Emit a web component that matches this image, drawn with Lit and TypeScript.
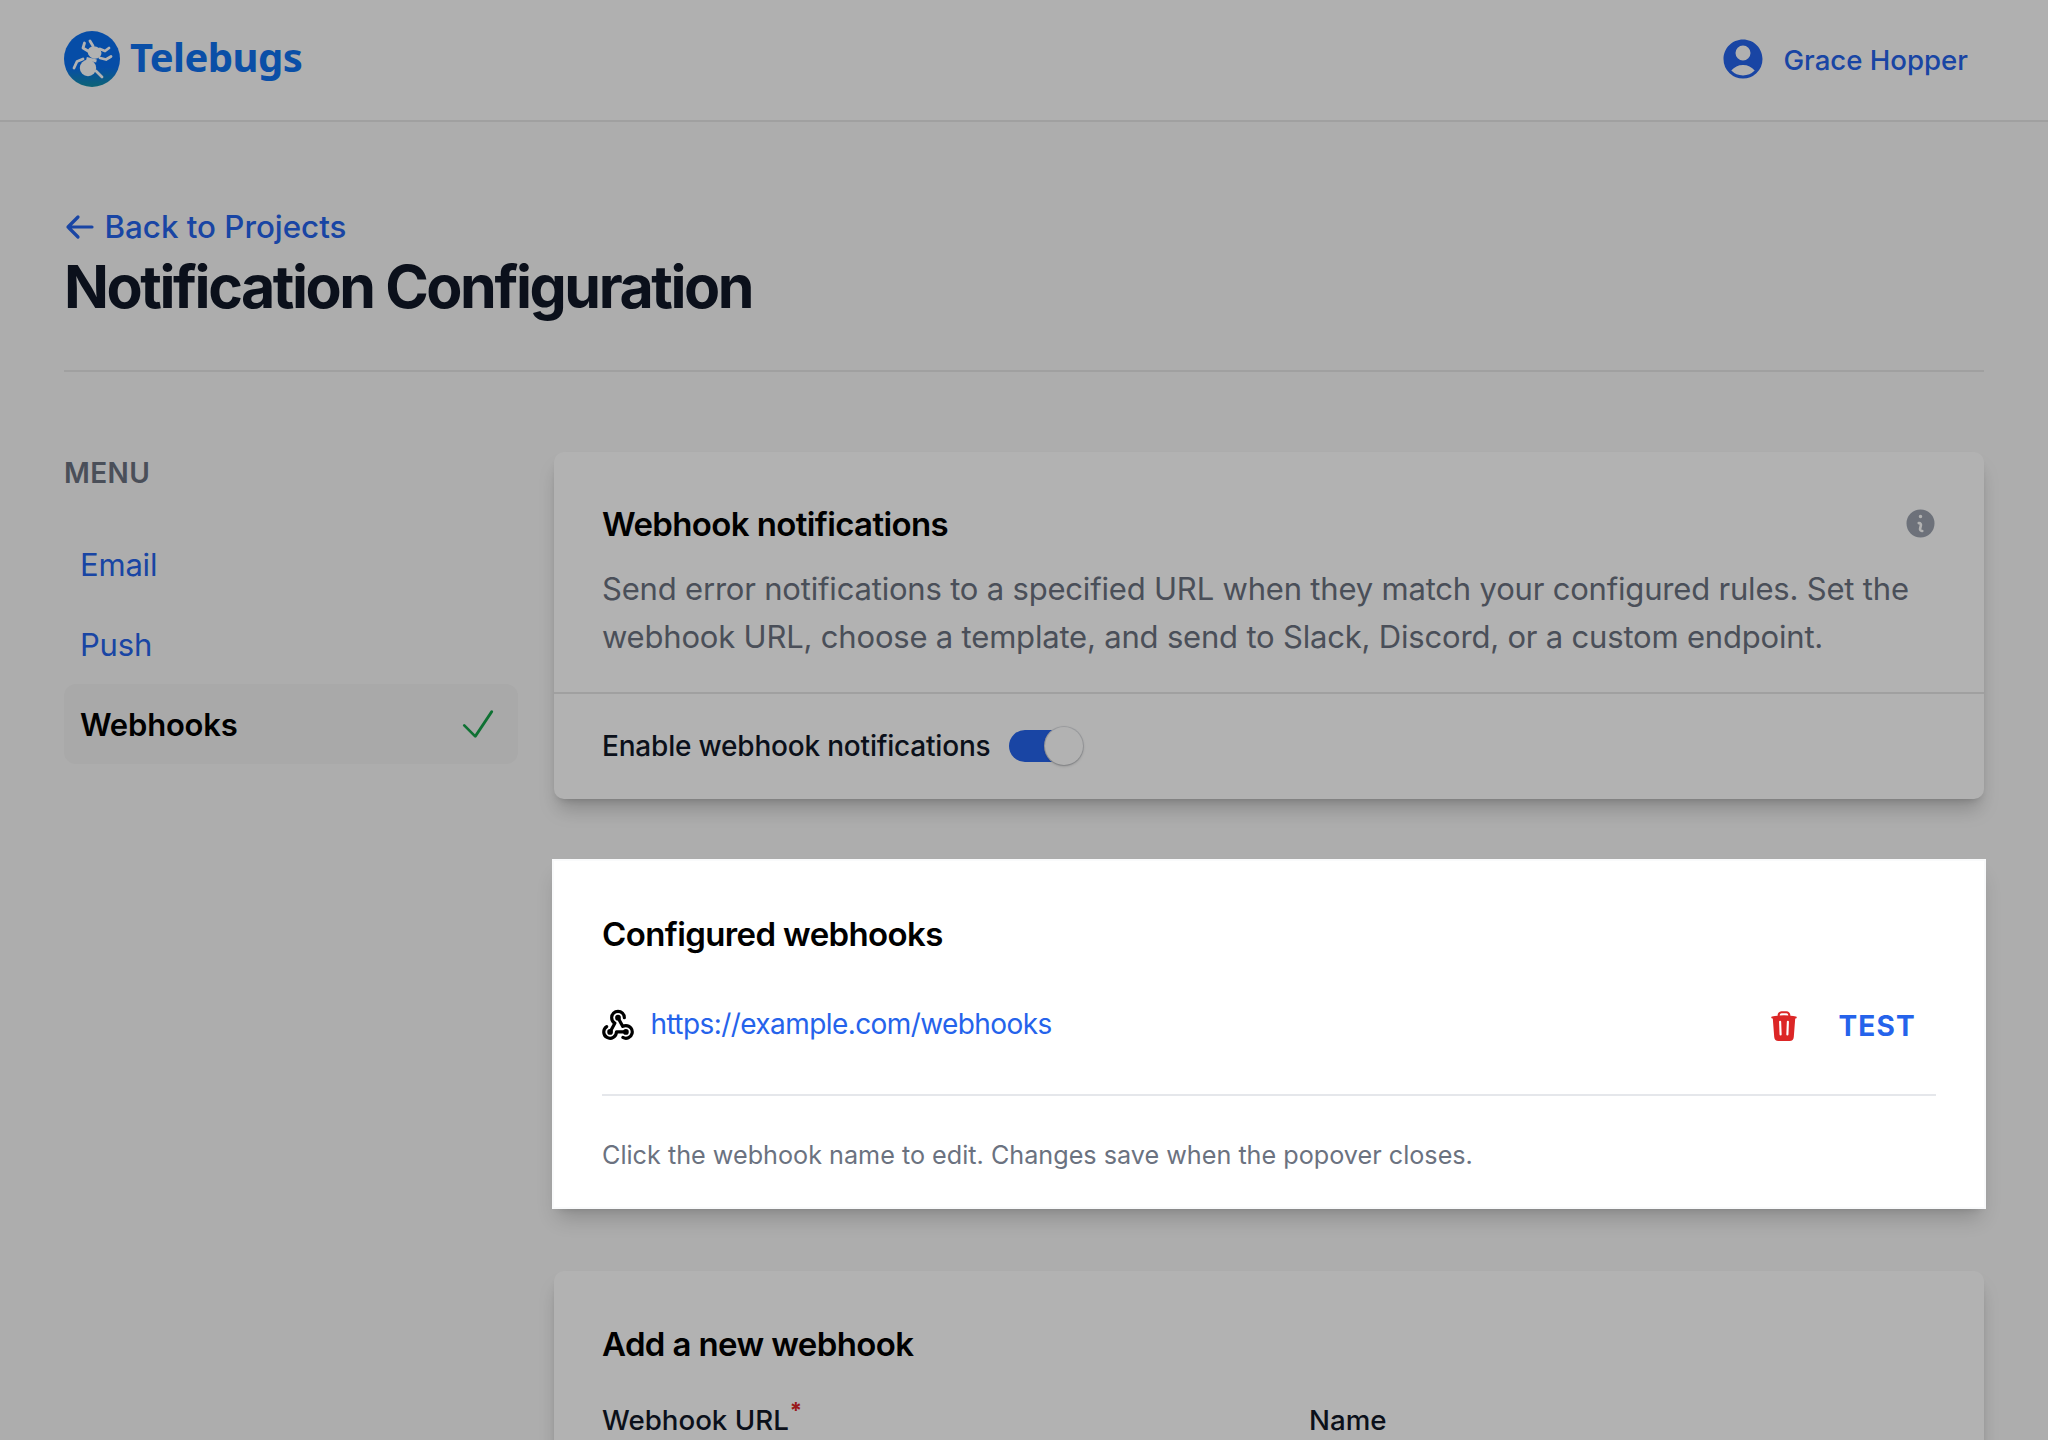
import { LitElement, html, css } from "lit";
import { customElement } from "lit/decorators.js";

@customElement("app-root")
export class AppRoot extends LitElement {
  static styles = css`
    :host { display: block; position: relative; width: 2048px; height: 1440px; overflow: hidden; background: #f8f8f8; font-family: Inter, "Liberation Sans", sans-serif; color: #000; }
    * { box-sizing: border-box; }
    .overlay { position: absolute; inset: 0; background: rgba(0,0,0,.3); z-index: 1; pointer-events: none; }
    header { height: 122px; background: #fcfcfc; border-bottom: 2px solid #e5e5e5; padding: 0 80px 2px 64px; display: flex; align-items: center; justify-content: space-between; }
    .brand { display: flex; align-items: center; gap: 10px; }
    .brand svg { width: 56px; height: 56px; display: block; }
    .brand span { font: 700 40px/56px "Noto Sans", sans-serif; color: #0f71f0; margin-top: -4px; letter-spacing: -.55px; }
    .user { display: flex; align-items: center; gap: 16.5px; color: #2563eb; font-size: 27.6px; font-weight: 500; }
    .user span { margin-top: 2px; }
    .user svg { width: 48px; height: 48px; display: block; }
    main { padding: 83px 64px 0; }
    .back { display: flex; align-items: center; gap: 8.5px; height: 44px; color: #2563eb; font-size: 31.3px; font-weight: 500; }
    .back svg { width: 32px; height: 32px; }
    h1 { margin: 2px 0 0; font-size: 59px; line-height: 72px; font-weight: 700; letter-spacing: -2.43px; color: #111827; }
    .rule { height: 2px; background: #e5e5e5; margin-top: 47px; }
    .cols { display: grid; grid-template-columns: 454px 1fr; column-gap: 36px; margin-top: 80px; }
    .side h2 { margin: 0; padding-top: 7px; font-size: 28px; line-height: 28px; font-weight: 600; letter-spacing: .4px; color: #6b7280; }
    .nav { margin-top: 37px; display: flex; flex-direction: column; }
    .nav a { height: 80px; padding: 0 18px 0 16px; display: flex; align-items: center; justify-content: space-between; font-size: 31px; letter-spacing: -.2px; color: #2563eb; border-radius: 12px; }
    .nav a.on { color: #000; font-weight: 600; background: #f2f2f2; }
    .nav svg { width: 44px; height: 44px; color: #16a34a; }
    .card { background: #fff; border-radius: 10px; box-shadow: 0 14px 20px -4px rgba(0,0,0,.2), 0 5px 8px -5px rgba(0,0,0,.2); }
    .card h3 { margin: 0; font-size: 33px; line-height: 44px; font-weight: 600; letter-spacing: -.62px; }
    .intro { padding: 50px 48px 31px; border-bottom: 2px solid #e5e5e5; position: relative; }
    .intro p { margin: 19px 0 0; font-size: 31px; letter-spacing: -.19px; line-height: 48px; color: #6b7280; }
    .info { position: absolute; right: 46px; top: 54px; width: 35px; height: 35px; color: #9ca3af; }
    .toggle-row { height: 105px; padding: 0 48px 2px; display: flex; align-items: center; gap: 19px; font-size: 28px; letter-spacing: -.2px; font-weight: 500; color: #111827; }
    .track { width: 74px; height: 32px; border-radius: 16px; background: #2563eb; position: relative; }
    .knob { position: absolute; right: 0; top: -3px; width: 38px; height: 38px; border-radius: 50%; background: #fff; box-shadow: 0 1px 3px rgba(0,0,0,.25), 0 0 0 1px #e5e7eb; }
    .spot { position: relative; z-index: 2; margin-top: 62px; padding: 51px 48px 32px; border-radius: 0; outline: 2px solid #f9fafb; }
    .row { display: flex; align-items: center; height: 60px; margin-top: 38px; }
    .hook { width: 38px; height: 38px; color: #000; margin: 0 13.5px 0 -3px; flex: none; }
    .url { color: #2563eb; font-size: 28px; letter-spacing: -.58px; flex: 1; }
    .trash { width: 34px; height: 34px; color: #dc2626; margin-top: 3px; }
    .test { margin: 4px 20px 0 37px; font-size: 28px; font-weight: 650; letter-spacing: 1.2px; color: #2563eb; }
    .divider { height: 2px; background: #e5e7eb; margin-top: 40px; }
    .hint { margin: 39px 0 0; font-size: 25.2px; line-height: 40px; color: #6b7280; }
    .add { margin-top: 64px; padding: 51px 48px 80px; }
    .fields { display: grid; grid-template-columns: 1fr 1fr; column-gap: 80px; margin-top: 34px; }
    .fields label { font-size: 27.7px; line-height: 40px; font-weight: 500; color: #111827; }
    .fields i { font-style: normal; color: #dc2626; font-size: 22px; font-weight: 700; vertical-align: 12px; margin-left: 1px; line-height: 0; }
  `;

  render() {
    return html`
      <header>
        <div class="brand">
          <svg viewBox="0 0 56 56">
            <defs><linearGradient id="g" x1="0" y1="0" x2="0" y2="1"><stop offset=".65" stop-color="#0a6ff0"/><stop offset="1" stop-color="#1490a8"/></linearGradient></defs>
            <circle cx="28" cy="28" r="28" fill="url(#g)"/>
            <g fill="none" stroke="#fff" stroke-width="2.8" stroke-linecap="round" stroke-linejoin="round">
              <path d="M19 28 13 30.500 10 37M32 40l6 6M24 20l-5-3 1.500-5M29 15l-3-5M36 18l5 2 4-3M36 27l6 1.500 5-3"/>
            </g>
            <circle cx="24" cy="37" r="8.200" fill="#fff"/>
            <ellipse cx="30.500" cy="21.500" rx="7" ry="6" transform="rotate(20 30.500 21.500)" fill="#fff"/>
            <path d="M22.500 27.500l10 2.500" stroke="#fff" stroke-width="3"/>
          </svg>
          <span>Telebugs</span>
        </div>
        <div class="user">
          <svg viewBox="0 0 24 24" fill="currentColor"><path fill-rule="evenodd" clip-rule="evenodd" d="M18.685 19.097A9.723 9.723 0 0 0 21.75 12c0-5.385-4.365-9.75-9.75-9.75S2.250 6.615 2.250 12a9.723 9.723 0 0 0 3.065 7.097A9.716 9.716 0 0 0 12 21.750a9.716 9.716 0 0 0 6.685-2.653Zm-12.540-1.285A7.486 7.486 0 0 1 12 15a7.486 7.486 0 0 1 5.855 2.812A8.224 8.224 0 0 1 12 20.250a8.224 8.224 0 0 1-5.855-2.438ZM15.750 9a3.750 3.750 0 1 1-7.500 0 3.750 3.750 0 0 1 7.500 0Z"/></svg>
          <span>Grace Hopper</span>
        </div>
      </header>
      <main>
        <div class="back">
          <svg viewBox="0 0 24 24" fill="none" stroke="currentColor" stroke-width="2.4" stroke-linecap="round" stroke-linejoin="round"><path d="M10.500 19.500 3 12l7.500-7.500M3 12h18"/></svg>
          <span>Back to Projects</span>
        </div>
        <h1>Notification Configuration</h1>
        <div class="rule"></div>
        <div class="cols">
          <aside class="side">
            <h2>MENU</h2>
            <nav class="nav">
              <a>Email</a>
              <a>Push</a>
              <a class="on">Webhooks
                <svg viewBox="0 0 24 24" fill="none" stroke="currentColor" stroke-width="1.500" stroke-linecap="round" stroke-linejoin="round"><path d="m4.500 12.750 6 6 9-13.500"/></svg>
              </a>
            </nav>
          </aside>
          <section>
            <div class="card">
              <div class="intro">
                <h3>Webhook notifications</h3>
                <svg class="info" viewBox="0 0 20 20" fill="currentColor"><path fill-rule="evenodd" clip-rule="evenodd" d="M18 10a8 8 0 1 1-16 0 8 8 0 0 1 16 0Zm-7-4a1 1 0 1 1-2 0 1 1 0 0 1 2 0ZM9 9a.75.75 0 0 0 0 1.500h.253a.25.25 0 0 1 .244.304l-.459 2.066A1.750 1.750 0 0 0 10.747 15H11a.75.75 0 0 0 0-1.500h-.253a.25.25 0 0 1-.244-.304l.459-2.066A1.750 1.750 0 0 0 9.253 9H9Z"/></svg>
                <p>Send error notifications to a specified URL when they match your configured rules. Set the webhook URL, choose a template, and send to Slack, Discord, or a custom endpoint.</p>
              </div>
              <div class="toggle-row">
                <span>Enable webhook notifications</span>
                <div class="track"><div class="knob"></div></div>
              </div>
            </div>
            <div class="card spot">
              <h3>Configured webhooks</h3>
              <div class="row">
                <svg class="hook" viewBox="0 0 24 24" fill="none" stroke="currentColor" stroke-width="2" stroke-linecap="round" stroke-linejoin="round"><path d="M4.876 13.610a4 4 0 1 0 6.124 3.390h6"/><path d="M15.066 20.502a4 4 0 1 0 1.934-7.502c-.706 0-1.424.179-2 .5l-3-5.500"/><path d="M16 8a4 4 0 1 0-8 0c0 1.506.77 2.818 2 3.500l-3 5.500"/><circle cx="12" cy="8" r=".8" fill="currentColor"/><circle cx="7" cy="17" r=".8" fill="currentColor"/><circle cx="17" cy="17" r=".8" fill="currentColor"/></svg>
                <span class="url">https://example.com/webhooks</span>
                <svg class="trash" viewBox="0 0 24 24" fill="currentColor"><path fill-rule="evenodd" clip-rule="evenodd" d="M16.500 4.478v.227a48.816 48.816 0 0 1 3.878.512.75.75 0 1 1-.256 1.478l-.209-.035-1.005 13.070a3 3 0 0 1-2.991 2.770H8.084a3 3 0 0 1-2.991-2.770L4.087 6.660l-.209.035a.75.75 0 0 1-.256-1.478A48.567 48.567 0 0 1 7.500 4.705v-.227c0-1.564 1.213-2.900 2.816-2.951a52.662 52.662 0 0 1 3.369 0c1.603.051 2.815 1.387 2.815 2.951Zm-6.136-1.452a51.196 51.196 0 0 1 3.273 0C14.390 3.050 15 3.684 15 4.478v.113a49.488 49.488 0 0 0-6 0v-.113c0-.794.609-1.428 1.364-1.452Zm-.355 5.945a.75.75 0 1 0-1.500.058l.347 9a.75.75 0 1 0 1.499-.058l-.346-9Zm5.480.058a.75.75 0 1 0-1.498-.058l-.347 9a.75.75 0 0 0 1.500.058l.345-9Z"/></svg>
                <span class="test">TEST</span>
              </div>
              <div class="divider"></div>
              <p class="hint">Click the webhook name to edit. Changes save when the popover closes.</p>
            </div>
            <div class="card add">
              <h3>Add a new webhook</h3>
              <div class="fields">
                <label>Webhook URL<i>*</i></label>
                <label>Name</label>
              </div>
            </div>
          </section>
        </div>
      </main>
      <div class="overlay"></div>
    `;
  }
}
